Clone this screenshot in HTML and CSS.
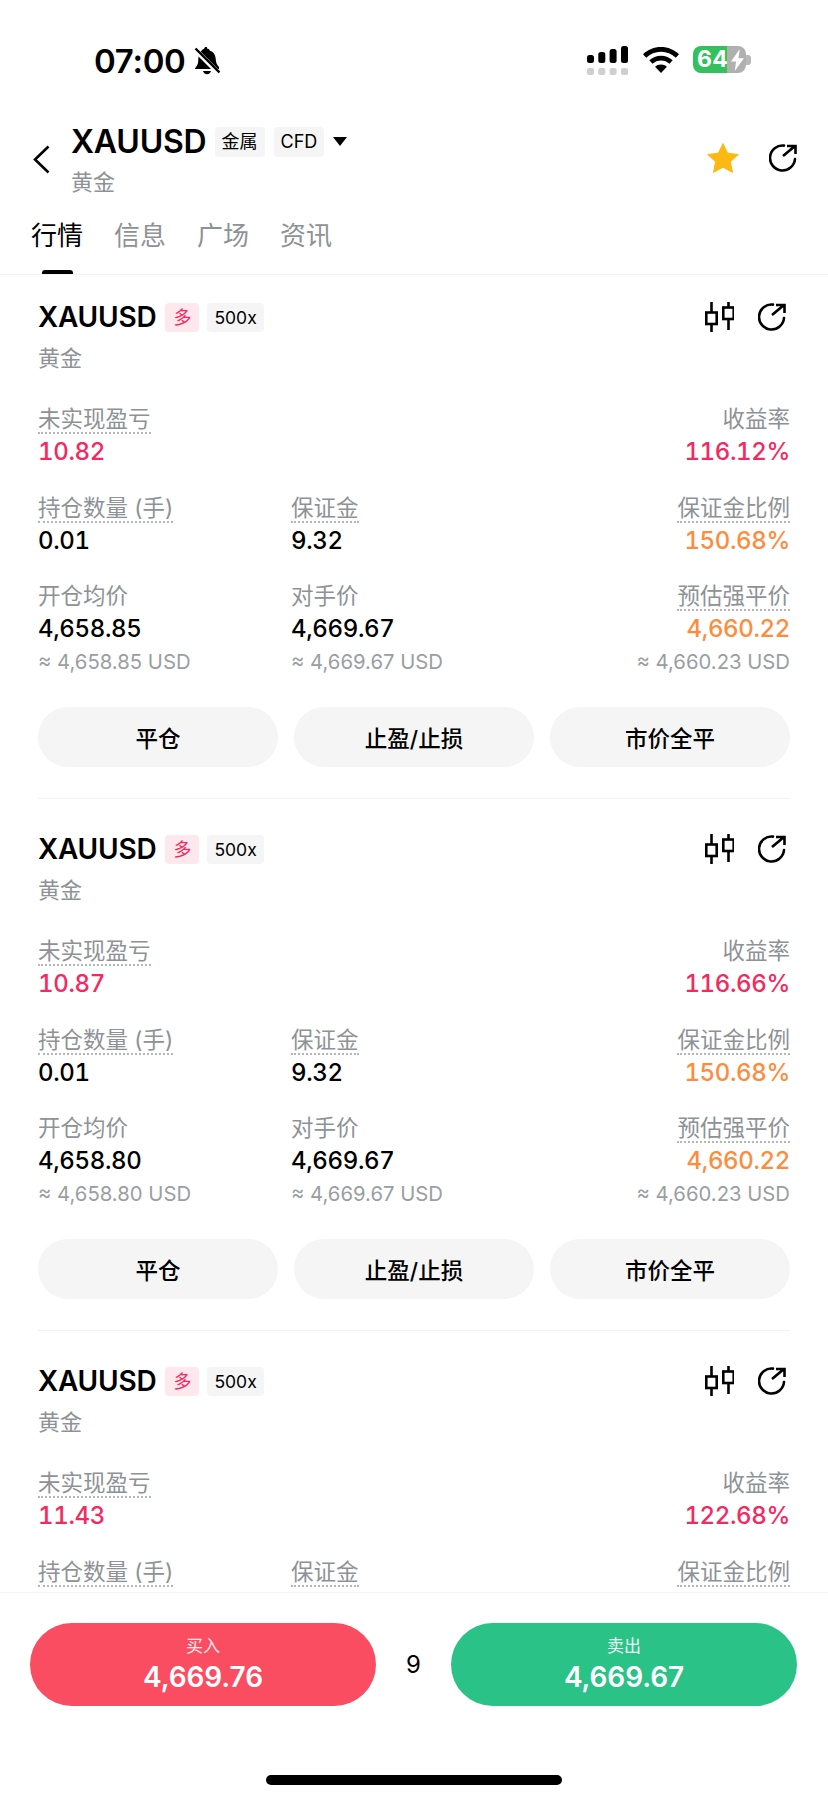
FILE: index.html
```html
<!DOCTYPE html>
<html lang="zh-CN">
<head>
  <meta charset="UTF-8" />
  <meta name="viewport" content="width=device-width, initial-scale=1.0"/>
  <title>XAUUSD</title>
  <link rel="stylesheet" href="styles.css">
</head>
<body>
  <svg class="defs" width="0" height="0">
    <symbol id="share" viewBox="0 0 28 28">
      <path d="M15 1.600A12.500 12.500 0 1 0 26 15" fill="none" stroke="currentColor" stroke-width="2.600" stroke-linecap="round"/>
      <path d="M14 12 26 2M18 2H26.500V10" fill="none" stroke="currentColor" stroke-width="2.600"/>
    </symbol>
    <symbol id="candles" viewBox="0 0 29 30">
      <path d="M6.500 0V30M23.500 0V28" fill="none" stroke="currentColor" stroke-width="2.600"/>
      <rect x="1.300" y="10.500" width="10.400" height="11.500" fill="#fff" stroke="currentColor" stroke-width="2.600"/>
      <rect x="18.300" y="5.500" width="10.400" height="11.500" fill="#fff" stroke="currentColor" stroke-width="2.600"/>
    </symbol>
  </svg>

  <div class="status">
    <div class="status-left">
      <span class="time">07:00</span>
      <svg class="bell" viewBox="0 0 26 28">
        <path d="M13 1.500c1.700 0 2.600 1 2.900 2.300 3.700 1 5.600 4 5.800 8 .1 3.600 1.200 6 3.300 8.200v2H3c-2.500 0-2.500 0-1-2 1.500-2 2.300-3.800 2.300-7 0-5 2.600-10 5.800-11.200.3-1.300 1.200-2.300 2.900-2.300zM9 24h8c-.4 2-2 3.200-4 3.200S9.400 26 9 24z"/>
        <path d="M1 2.500 25 26.500" stroke="#fff" stroke-width="5"/>
        <path d="M1.500 1.500 25.500 25.500" stroke="#000" stroke-width="2.400"/>
      </svg>
    </div>
    <div class="status-right">
      <svg class="signal" viewBox="0 0 41 29">
        <rect x="0" y="9" width="7" height="8" rx="2.500"/>
        <rect x="11.300" y="6" width="7" height="11" rx="2.500"/>
        <rect x="22.600" y="3" width="7" height="14" rx="2.500"/>
        <rect x="34" y="0" width="7" height="17" rx="2.500"/>
        <g fill="#cfcfcf">
          <rect x="0" y="22" width="7" height="7" rx="2"/>
          <rect x="11.300" y="22" width="7" height="7" rx="2"/>
          <rect x="22.600" y="22" width="7" height="7" rx="2"/>
          <rect x="34" y="22" width="7" height="7" rx="2"/>
        </g>
      </svg>
      <svg class="wifi" viewBox="0 0 36 26">
        <path d="M18 0C25 0 31.200 2.700 36 7.200L32.800 10.700C28.900 7 23.700 4.800 18 4.800S7.100 7 3.200 10.700L0 7.200C4.800 2.700 11 0 18 0z"/>
        <path d="M18 8.700c4.500 0 8.600 1.700 11.700 4.600l-3.200 3.500C24.200 14.700 21.300 13.500 18 13.500s-6.200 1.200-8.500 3.300l-3.200-3.500C9.400 10.400 13.500 8.700 18 8.700z"/>
        <path d="M18 17.500c2.300 0 4.300.8 5.900 2.200L18 26l-5.900-6.300c1.600-1.400 3.600-2.200 5.900-2.200z"/>
      </svg>
      <div class="battery">
        <span class="battery-level">64</span>
        <svg class="bolt" viewBox="0 0 14 24"><path d="M9.500 0 0 13.500h5.500L4 24l10-14H8z"/></svg>
      </div>
      <span class="battery-nub"></span>
    </div>
  </div>

  <header class="nav">
    <svg class="back" viewBox="0 0 17 29"><path d="M15.500 1.500 2 14.500 15.500 27.500" fill="none" stroke="#000" stroke-width="2.600"/></svg>
    <div class="nav-title">
      <div class="nav-top">
        <span class="symbol-big">XAUUSD</span>
        <span class="tag tag-big">金属</span>
        <span class="tag tag-big">CFD</span>
        <span class="caret"></span>
      </div>
      <div class="nav-sub">黄金</div>
    </div>
    <svg class="star" viewBox="0 0 32 30"><path d="M16 .5 20.600 10.200 31.300 11.500 23.400 18.800 25.500 29.400 16 24.200 6.500 29.400 8.600 18.800 .7 11.500 11.400 10.200z" fill="#fdb913" stroke="#fdb913" stroke-linejoin="round"/></svg>
    <svg class="icon-share"><use href="#share"/></svg>
  </header>

  <nav class="tabs">
    <a class="tab active">行情</a>
    <a class="tab">信息</a>
    <a class="tab">广场</a>
    <a class="tab">资讯</a>
  </nav>

  <main class="list">
    <section class="card">
      <div class="card-head">
        <span class="symbol">XAUUSD</span>
        <span class="tag tag-long">多</span>
        <span class="tag">500x</span>
        <svg class="icon-candles"><use href="#candles"/></svg>
        <svg class="icon-share"><use href="#share"/></svg>
      </div>
      <div class="card-sub">黄金</div>
      <div class="row row-first">
        <div class="cell"><span class="label dotted">未实现盈亏</span><span class="value red">10.82</span></div>
        <div class="cell"></div>
        <div class="cell right"><span class="label">收益率</span><span class="value red">116.12%</span></div>
      </div>
      <div class="row">
        <div class="cell"><span class="label dotted">持仓数量 (手)</span><span class="value">0.01</span></div>
        <div class="cell"><span class="label dotted">保证金</span><span class="value">9.32</span></div>
        <div class="cell right"><span class="label dotted">保证金比例</span><span class="value orange">150.68%</span></div>
      </div>
      <div class="row">
        <div class="cell"><span class="label">开仓均价</span><span class="value">4,658.85</span><span class="approx">≈ 4,658.85 USD</span></div>
        <div class="cell"><span class="label">对手价</span><span class="value">4,669.67</span><span class="approx">≈ 4,669.67 USD</span></div>
        <div class="cell right"><span class="label dotted">预估强平价</span><span class="value orange">4,660.22</span><span class="approx">≈ 4,660.23 USD</span></div>
      </div>
      <div class="actions">
        <button class="btn">平仓</button>
        <button class="btn">止盈/止损</button>
        <button class="btn">市价全平</button>
      </div>
    </section>

    <section class="card">
      <div class="card-head">
        <span class="symbol">XAUUSD</span>
        <span class="tag tag-long">多</span>
        <span class="tag">500x</span>
        <svg class="icon-candles"><use href="#candles"/></svg>
        <svg class="icon-share"><use href="#share"/></svg>
      </div>
      <div class="card-sub">黄金</div>
      <div class="row row-first">
        <div class="cell"><span class="label dotted">未实现盈亏</span><span class="value red">10.87</span></div>
        <div class="cell"></div>
        <div class="cell right"><span class="label">收益率</span><span class="value red">116.66%</span></div>
      </div>
      <div class="row">
        <div class="cell"><span class="label dotted">持仓数量 (手)</span><span class="value">0.01</span></div>
        <div class="cell"><span class="label dotted">保证金</span><span class="value">9.32</span></div>
        <div class="cell right"><span class="label dotted">保证金比例</span><span class="value orange">150.68%</span></div>
      </div>
      <div class="row">
        <div class="cell"><span class="label">开仓均价</span><span class="value">4,658.80</span><span class="approx">≈ 4,658.80 USD</span></div>
        <div class="cell"><span class="label">对手价</span><span class="value">4,669.67</span><span class="approx">≈ 4,669.67 USD</span></div>
        <div class="cell right"><span class="label dotted">预估强平价</span><span class="value orange">4,660.22</span><span class="approx">≈ 4,660.23 USD</span></div>
      </div>
      <div class="actions">
        <button class="btn">平仓</button>
        <button class="btn">止盈/止损</button>
        <button class="btn">市价全平</button>
      </div>
    </section>

    <section class="card card-cut">
      <div class="card-head">
        <span class="symbol">XAUUSD</span>
        <span class="tag tag-long">多</span>
        <span class="tag">500x</span>
        <svg class="icon-candles"><use href="#candles"/></svg>
        <svg class="icon-share"><use href="#share"/></svg>
      </div>
      <div class="card-sub">黄金</div>
      <div class="row row-first">
        <div class="cell"><span class="label dotted">未实现盈亏</span><span class="value red">11.43</span></div>
        <div class="cell"></div>
        <div class="cell right"><span class="label">收益率</span><span class="value red">122.68%</span></div>
      </div>
      <div class="row">
        <div class="cell"><span class="label dotted">持仓数量 (手)</span></div>
        <div class="cell"><span class="label dotted">保证金</span></div>
        <div class="cell right"><span class="label dotted">保证金比例</span></div>
      </div>
    </section>
  </main>

  <footer class="trade">
    <button class="trade-btn buy"><span class="trade-label">买入</span><span class="trade-price">4,669.76</span></button>
    <span class="spread">9</span>
    <button class="trade-btn sell"><span class="trade-label">卖出</span><span class="trade-price">4,669.67</span></button>
  </footer>
  <div class="home-wrap"><div class="home-bar"></div></div>
</body>
</html>
```

FILE: styles.css
```css
* {
  box-sizing: border-box;
}

body {
  font-family: Inter, "Noto Sans CJK SC", sans-serif;
  background: #fff;
  color: #000;
  margin: 0;
  width: 828px;
  height: 1800px;
  overflow: hidden;
  display: flex;
  flex-direction: column;
}

.defs {
  position: absolute;
}

/* status bar */
.status {
  height: 120px;
  flex: none;
  display: flex;
  justify-content: space-between;
  padding: 41px 77px 0 94px;
}

.status-left {
  display: flex;
  align-items: flex-start;
  gap: 8px;
}

.time {
  font-size: 33px;
  font-weight: 600;
  line-height: 40px;
  letter-spacing: -0.3px;
}

.bell {
  width: 26px;
  height: 28px;
  margin-top: 6px;
}

.status-right {
  display: flex;
  align-items: flex-start;
  padding-top: 5px;
}

.signal {
  width: 41px;
  height: 29px;
  margin-right: 15px;
}

.wifi {
  width: 36px;
  height: 26px;
  margin-top: 1px;
  margin-right: 14px;
}

.battery {
  width: 53px;
  height: 27px;
  border-radius: 8px;
  background: linear-gradient(to right, #34c05c 34px, #b0b0b0 34px);
  color: #fff;
  display: flex;
  align-items: center;
  padding-left: 4px;
}

.battery-level {
  font-size: 23px;
  font-weight: 700;
  line-height: 27px;
  letter-spacing: 0.3px;
}

.bolt {
  width: 13px;
  height: 22px;
  fill: #fff;
  margin-left: 3px;
}

.battery-nub {
  width: 5px;
  height: 10px;
  margin-top: 9px;
  border-radius: 0 3px 3px 0;
  background: #b8b8b8;
}

/* nav */
.nav {
  height: 78px;
  flex: none;
  display: flex;
  padding: 0 31px 0 33px;
  align-items: center;
}

.back {
  width: 17px;
  height: 29px;
  margin-right: 21px;
}

.nav-title {
  flex: 1;
}

.nav-top {
  display: flex;
  align-items: center;
}

.symbol-big {
  font-size: 32px;
  font-weight: 600;
  line-height: 40px;
  letter-spacing: -0.2px;
  margin-right: 8px;
}

.tag {
  font-size: 17.500px;
  line-height: 29px;
  height: 29px;
  padding: 0 7px;
  border-radius: 4px;
  background: #f5f5f5;
  margin-left: 8px;
}

.tag-big {
  font-size: 18px;
  height: 30px;
  line-height: 30px;
  margin-left: 0;
  margin-right: 9px;
}

.caret {
  width: 0;
  height: 0;
  border-left: 7px solid transparent;
  border-right: 7px solid transparent;
  border-top: 9px solid #000;
}

.nav-sub {
  font-size: 22px;
  line-height: 30px;
  color: #8e9296;
  margin-top: 5px;
}

.star {
  width: 32px;
  height: 30px;
  margin-right: 30px;
  margin-top: -3px;
}

.nav .icon-share {
  margin-top: -3px;
}

.icon-share {
  width: 28px;
  height: 28px;
  color: #000;
}

/* tabs */
.tabs {
  height: 77px;
  flex: none;
  display: flex;
  gap: 31px;
  padding: 19px 31px 0;
  border-bottom: 1px solid #f3f3f3;
}

.tab {
  font-size: 26px;
  line-height: 38px;
  color: #8e9296;
  width: 52px;
  position: relative;
}

.tab.active {
  color: #000;
}

.tab.active::after {
  content: "";
  position: absolute;
  left: 11px;
  right: 10px;
  top: 53px;
  height: 4px;
  background: #000;
  border-radius: 3px 3px 0 0;
}

/* position cards */
.list {
  flex: 1;
  min-height: 0;
  overflow: hidden;
  padding: 0 38px;
}

.card {
  border-bottom: 1px solid #f3f3f3;
  padding-top: 32px;
  height: 532px;
}

.card:first-child {
  padding-top: 24px;
  height: 524px;
}

.card-head {
  display: flex;
  align-items: center;
  height: 36px;
  padding-right: 4px;
}

.symbol {
  font-size: 28px;
  font-weight: 600;
  letter-spacing: -0.2px;
  margin-right: 1px;
}

.tag-long {
  background: #fde8ee;
  color: #f5285f;
  padding: 0 8px;
  font-size: 18px;
}

.icon-candles {
  width: 29px;
  height: 30px;
  margin-left: auto;
  margin-right: 24px;
}

.card-sub {
  font-size: 22px;
  line-height: 30px;
  color: #8e9296;
  margin-top: 8px;
}

.row {
  display: grid;
  grid-template-columns: 253px 1fr auto;
  margin-top: 24.500px;
}

.row-first {
  margin-top: 31px;
}

.cell {
  display: flex;
  flex-direction: column;
  align-items: flex-start;
}

.cell.right {
  align-items: flex-end;
}

.label {
  font-size: 22.500px;
  line-height: 30px;
  color: #8e9296;
}

.dotted {
  line-height: 26px;
  margin-top: 2px;
  border-bottom: 2px dotted #b4b6b8;
}

.value {
  font-size: 24px;
  font-weight: 500;
  line-height: 32px;
  margin-top: 2px;
  font-variant-numeric: tabular-nums;
  letter-spacing: -0.35px;
}

.red {
  color: #f5285f;
}

.orange {
  color: #ff8c3c;
}

.approx {
  font-size: 20.300px;
  line-height: 28px;
  color: #9a9ea2;
  margin-top: 3px;
}

.actions {
  display: flex;
  gap: 16px;
  margin-top: 31px;
}

.btn {
  flex: 1;
  height: 60px;
  border: none;
  border-radius: 30px;
  background: #f5f5f5;
  color: #000;
  font-family: inherit;
  font-size: 22.500px;
  font-weight: 500;
}

/* bottom trade bar */
.trade {
  height: 134px;
  flex: none;
  border-top: 1px solid #f3f3f3;
  padding: 30px 31px 0 30px;
  display: flex;
  align-items: flex-start;
}

.trade-btn {
  width: 346px;
  height: 83px;
  border: none;
  border-radius: 42px;
  color: #fff;
  font-family: inherit;
  display: flex;
  flex-direction: column;
  align-items: center;
  justify-content: center;
}

.buy {
  background: #fa4d62;
}

.sell {
  background: #2bc287;
}

.trade-label {
  font-size: 17px;
  line-height: 24px;
  opacity: 0.9;
}

.trade-price {
  font-size: 28px;
  font-weight: 600;
  line-height: 38px;
  letter-spacing: -0.1px;
}

.spread {
  flex: 1;
  text-align: center;
  font-size: 24px;
  line-height: 83px;
}

.home-wrap {
  height: 74px;
  flex: none;
  display: flex;
  justify-content: center;
  padding-top: 49px;
}

.home-bar {
  width: 296px;
  height: 10px;
  border-radius: 5px;
  background: #000;
}
```
